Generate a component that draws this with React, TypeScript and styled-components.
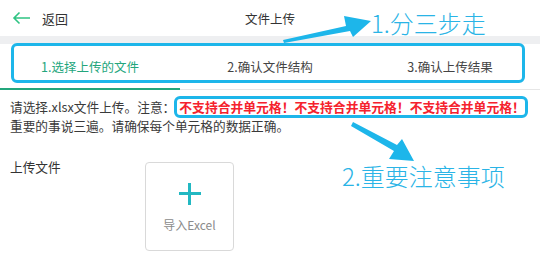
import React from "react";
import styled, { createGlobalStyle } from "styled-components";

const GlobalStyle = createGlobalStyle`
  body {
    margin: 0;
    background: #fff;
    font-family: "Noto Sans CJK SC", "Noto Sans", sans-serif;
  }
`;

const CYAN = "#1db6ea";
const GREEN = "#23a67c";

const steps = ["1.选择上传的文件", "2.确认文件结构", "3.确认上传结果"];
const warning = "不支持合并单元格！";

const App: React.FC = () => {
  return (
    <Page>
      <GlobalStyle />
      <Header>
        <Back>
          <svg width="19" height="14" viewBox="0 0 19 14">
            <path
              d="M18 7H2M7.5 1.5L2 7l5.5 5.5"
              fill="none"
              stroke="#2fc383"
              strokeWidth="1.6"
            />
          </svg>
          <span>返回</span>
        </Back>
        <Title>文件上传</Title>
        <span />
      </Header>
      <Gap />
      <Tabs>
        {steps.map((s, i) => (
          <Tab key={s} $active={i === 0}>
            {s}
          </Tab>
        ))}
      </Tabs>
      <Body>
        <Notice>
          请选择.xlsx文件上传。注意：
          <Warn>
            {warning}
            {warning}
            {warning}
          </Warn>
          <br />
          重要的事说三遍。请确保每个单元格的数据正确。
        </Notice>
        <UploadRow>
          <Label>上传文件</Label>
          <UploadBox>
            <Plus />
            <UploadText>导入Excel</UploadText>
          </UploadBox>
        </UploadRow>
      </Body>

      <Highlight style={{ left: 11, top: 43, width: 514, height: 40 }} />
      <Highlight style={{ left: 174, top: 96, width: 354, height: 22 }} />
      <Arrows width="540" height="274" viewBox="0 0 540 274">
        <polygon
          points="283,40 346,26 344,16 371,21 353,37 350,31 284,43"
          fill={CYAN}
        />
        <polygon
          points="351,126 353,122 397,145 402,139 414,161 389,159 394,151"
          fill={CYAN}
        />
      </Arrows>
      <Note style={{ left: 371, top: 7 }}>1.分三步走</Note>
      <Note style={{ left: 342, top: 160 }}>2.重要注意事项</Note>
    </Page>
  );
};

const Page = styled.div`
  position: relative;
  width: 540px;
  height: 274px;
  overflow: hidden;
  background: #fff;
`;

const Header = styled.header`
  height: 36px;
  display: grid;
  grid-template-columns: 1fr auto 1fr;
  align-items: center;
  padding: 0 12px;
  background: #fff;
`;

const Back = styled.div`
  display: flex;
  align-items: center;
  gap: 11px;
  font-size: 13px;
  color: #333;
`;

const Title = styled.h1`
  margin: 0;
  font-size: 12.5px;
  font-weight: 400;
  color: #333;
`;

const Gap = styled.div`
  height: 8px;
  background: #eeeff1;
`;

const Tabs = styled.nav`
  display: grid;
  grid-template-columns: repeat(3, 1fr);
  height: 45px;
  border-bottom: 1px solid #e6e6e6;
  background: #fff;
`;

const Tab = styled.div<{ $active?: boolean }>`
  display: flex;
  align-items: center;
  justify-content: center;
  font-size: 12.5px;
  color: ${(p) => (p.$active ? GREEN : "#444")};
  border-bottom: 2px solid ${(p) => (p.$active ? GREEN : "transparent")};
  margin-bottom: -1px;
`;

const Body = styled.main`
  padding: 7px 10px 0;
`;

const Notice = styled.p`
  margin: 0;
  font-size: 12.7px;
  line-height: 19px;
  color: #3a3a3a;
`;

const Warn = styled.span`
  color: #f5222d;
  font-weight: 600;
  font-size: 12.8px;
  margin-left: 4px;
`;

const UploadRow = styled.div`
  display: flex;
  align-items: flex-start;
  margin-top: 27px;
`;

const Label = styled.div`
  width: 135px;
  font-size: 12.7px;
  color: #333;
  line-height: 16px;
  margin-top: -3px;
`;

const UploadBox = styled.div`
  width: 87px;
  height: 87px;
  border: 1px solid #d9d9d9;
  border-radius: 4px;
  display: flex;
  flex-direction: column;
  align-items: center;
  justify-content: center;
  gap: 11px;
`;

const Plus = styled.div`
  position: relative;
  width: 22px;
  height: 22px;
  margin-top: 2px;
  &::before,
  &::after {
    content: "";
    position: absolute;
    background: #22b8c2;
  }
  &::before {
    left: 0;
    right: 0;
    top: 9.5px;
    height: 3px;
  }
  &::after {
    top: 0;
    bottom: 0;
    left: 9.5px;
    width: 3px;
  }
`;

const UploadText = styled.div`
  font-size: 12px;
  color: #8c8c8c;
`;

const Highlight = styled.div`
  position: absolute;
  box-sizing: border-box;
  border: 3px solid ${CYAN};
  border-radius: 6px;
  pointer-events: none;
`;

const Arrows = styled.svg`
  position: absolute;
  left: 0;
  top: 0;
  pointer-events: none;
`;

const Note = styled.div`
  position: absolute;
  font-size: 24px;
  font-weight: 300;
  line-height: 32px;
  color: #2ab4e6;
  white-space: nowrap;
`;

export default App;
